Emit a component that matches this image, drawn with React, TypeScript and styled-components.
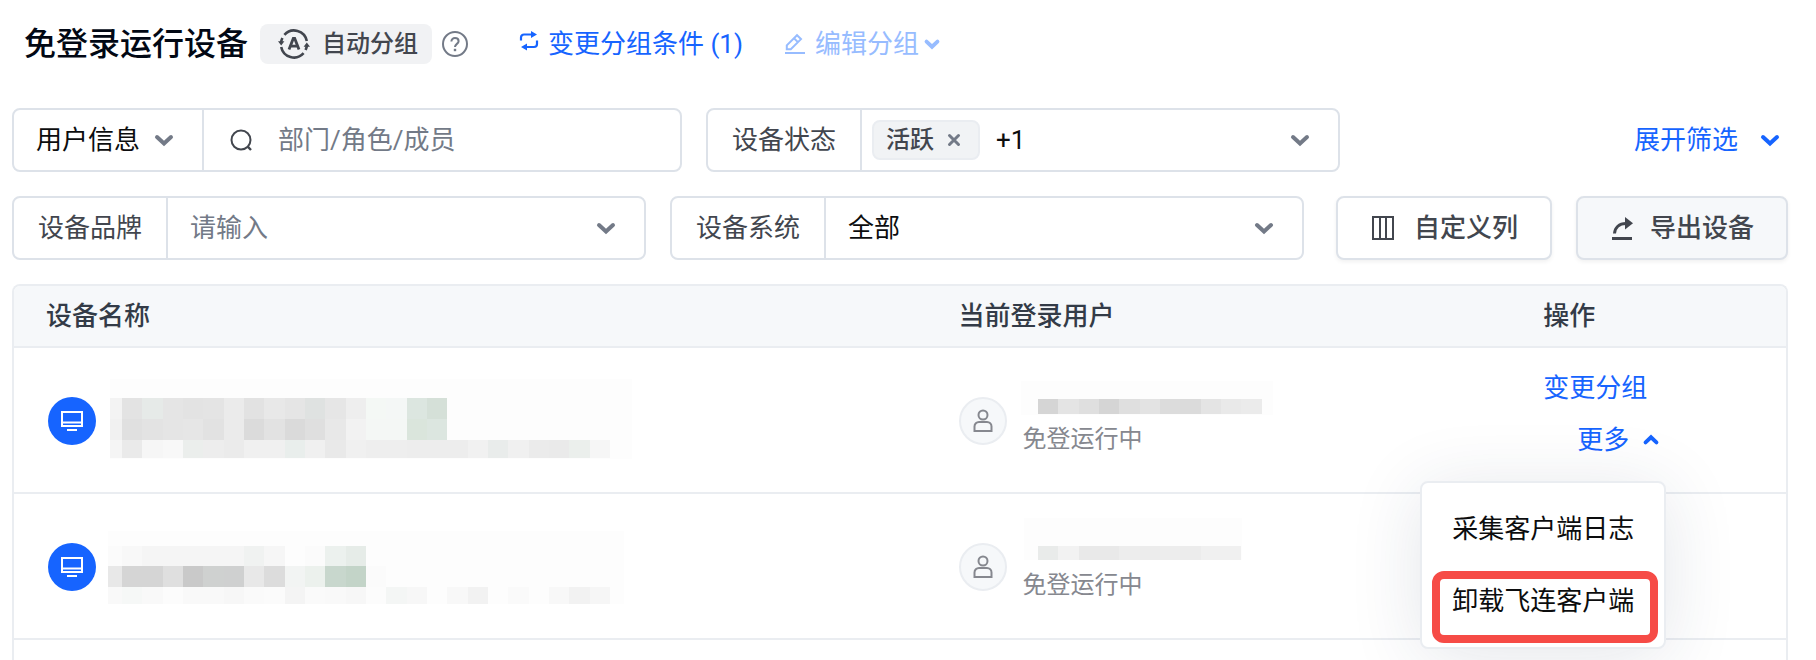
import React from "react";
import styled, { createGlobalStyle } from "styled-components";

const GlobalStyle = createGlobalStyle`
  *, *::before, *::after { box-sizing: border-box; }
  body {
    margin: 0;
    background: #fff;
    color: #0c0d0e;
    font-family: Roboto, "Noto Sans CJK SC", sans-serif;
    font-size: 26px;
    line-height: 40px;
  }
  button, input, select { font: inherit; color: inherit; }
  button { cursor: pointer; }
`;

const blue = "#1664ff";
const slate = "#737a87";
const ink = "#42464e";
const line = "#dde2e9";
const softLine = "#eaedf1";

const Page = styled.main`
  padding: 24px 28px 0 12px;
`;

const Header = styled.header`
  display: flex;
  align-items: center;
  height: 40px;
  padding-left: 12px;
`;

const Title = styled.h1`
  margin: 0 12px 0 0;
  font-size: 32px;
  font-weight: 500;
  line-height: 40px;
  color: #020814;
  white-space: nowrap;
`;

const Badge = styled.span`
  display: flex;
  align-items: center;
  gap: 12px;
  height: 40px;
  padding: 0 14px 0 18px;
  border-radius: 8px;
  background: #f1f2f4;
  color: ${ink};
  font-size: 24px;
  font-weight: 500;
  white-space: nowrap;
`;

const IconButton = styled.button`
  display: flex;
  padding: 0;
  border: 0;
  background: none;
  color: ${slate};
`;

const HelpButton = styled(IconButton)`
  margin: 0 52px 0 10px;
`;

const LinkButton = styled.button<{ $gap?: number }>`
  display: flex;
  align-items: center;
  gap: ${(p) => p.$gap ?? 8}px;
  padding: 0;
  border: 0;
  background: none;
  color: ${blue};
  white-space: nowrap;

  &:disabled {
    color: #97bcff;
    cursor: default;
  }
`;

const EditButton = styled(LinkButton)`
  margin-left: 42px;
`;

const WithChevron = styled.span`
  display: flex;
  align-items: center;
  gap: 6px;
`;

const Filters = styled.section`
  display: grid;
  gap: 24px;
  margin-top: 44px;
`;

const FilterRow = styled.div`
  display: flex;
  align-items: center;
  gap: 24px;
`;

const Field = styled.div<{ $basis: number }>`
  display: flex;
  flex: 0 1 ${(p) => p.$basis}px;
  min-width: 0;
  height: 64px;
  border: 2px solid ${line};
  border-radius: 8px;
  background: #fff;
`;

const FieldLabel = styled.label`
  display: flex;
  align-items: center;
  flex: none;
  padding: 0 24px;
  border-right: 2px solid ${line};
  color: ${ink};
  white-space: nowrap;
`;

const SelectBox = styled.span<{ $width?: number; $divided?: boolean }>`
  display: grid;
  flex: ${(p) => (p.$width ? `0 0 ${p.$width}px` : "1 1 0")};
  align-items: center;
  border-right: ${(p) => (p.$divided ? `2px solid ${line}` : "0")};

  > * { grid-area: 1 / 1; }
  > svg {
    justify-self: end;
    margin-right: 29px;
    color: ${slate};
    pointer-events: none;
  }
`;

const Select = styled.select`
  appearance: none;
  width: 100%;
  height: 60px;
  padding: 0 22px;
  border: 0;
  background: none;
  outline: none;
`;

const TextInput = styled.input`
  flex: 1;
  width: 100%;
  min-width: 0;
  height: 60px;
  padding: 0 22px;
  border: 0;
  background: none;
  outline: none;

  &::placeholder { color: ${slate}; opacity: 1; }
`;

const SearchBox = styled.label`
  display: flex;
  flex: 1;
  align-items: center;
  gap: 2px;
  padding-left: 26px;
  color: ${ink};
`;

const TagBox = styled.div`
  display: flex;
  flex: 1;
  align-items: center;
  gap: 16px;
  padding: 0 29px 0 10px;
`;

const Tag = styled.span`
  display: flex;
  align-items: center;
  gap: 14px;
  height: 40px;
  padding: 0 18px 0 12px;
  border: 2px solid ${softLine};
  border-radius: 8px;
  background: #f1f3f5;
  color: ${ink};
  font-size: 24px;
  font-weight: 500;
  line-height: 36px;
`;

const OpenButton = styled(IconButton)`
  margin-left: auto;
`;

const ExpandButton = styled(LinkButton)`
  margin: 0 9px 0 auto;
`;

const ActionButton = styled.button<{ $tinted?: boolean; $gap: number }>`
  display: flex;
  flex: none;
  align-items: center;
  justify-content: center;
  gap: ${(p) => p.$gap}px;
  height: 64px;
  padding: 0 32px 0 34px;
  border: 2px solid ${line};
  border-radius: 8px;
  background: ${(p) => (p.$tinted ? "#f6f8fa" : "#fff")};
  box-shadow: 0 2px 4px rgba(0, 0, 0, 0.06);
  color: ${ink};
  font-weight: 500;
  white-space: nowrap;
`;

const Actions = styled.div`
  display: flex;
  gap: 24px;
  margin-left: 8px;
`;

const DeviceTable = styled.table`
  width: 100%;
  margin-top: 24px;
  table-layout: fixed;
  border-collapse: separate;
  border-spacing: 0;
  border: 2px solid ${softLine};
  border-bottom: 0;
  border-radius: 8px 8px 0 0;
`;

const HeadCell = styled.th<{ $width?: string }>`
  width: ${(p) => p.$width ?? "auto"};
  height: 62px;
  padding: 0 32px;
  border-bottom: 2px solid ${softLine};
  background: #f6f8fa;
  color: #333b47;
  font-weight: 500;
  text-align: left;

  &:first-child { border-top-left-radius: 6px; }
  &:last-child { border-top-right-radius: 6px; }
`;

const Cell = styled.td`
  height: 146px;
  padding: 2px 32px 0;
  border-bottom: 2px solid ${softLine};
  vertical-align: middle;
`;

const NextCell = styled.td`
  height: 20px;
  padding: 0;
`;

const Identity = styled.div`
  display: flex;
  align-items: center;
  gap: 14px;
`;

const DeviceIdentity = styled(Identity)`
  padding-left: 2px;
`;

const DeviceIcon = styled.span`
  display: grid;
  flex: none;
  place-items: center;
  width: 48px;
  height: 48px;
  border-radius: 50%;
  background: ${blue};
  color: #fff;
`;

const UserIcon = styled(DeviceIcon)`
  border: 2px solid ${softLine};
  background: #f6f8fa;
  color: #86888f;
`;

const UserInfo = styled.div`
  display: grid;
  color: #86888f;
  font-size: 24px;
  line-height: 48px;
`;

const Status = styled.span`
  padding-left: 2px;
`;

const Operations = styled.div`
  display: flex;
  flex-direction: column;
  align-items: flex-start;
  height: 118px;
`;

const RowLink = styled(LinkButton)`
  height: 52px;
`;

const MoreWrap = styled.div`
  position: relative;
  margin-left: 34px;
`;

const Menu = styled.div`
  position: absolute;
  top: 67px;
  right: -8px;
  z-index: 1;
  width: 246px;
  padding: 10px 0;
  border: 2px solid ${softLine};
  border-radius: 8px;
  background: #fff;
  box-shadow: 0 8px 72px rgba(30, 50, 80, 0.12);
`;

const MenuItem = styled.button`
  display: block;
  width: 100%;
  height: 72px;
  padding: 0;
  border: 0;
  background: none;
  text-align: center;
  white-space: nowrap;
`;

const MarkedItem = styled.div`
  position: relative;

  &::after {
    content: "";
    position: absolute;
    inset: 6px 6px -6px 10px;
    border: 8px solid #f64b46;
    border-radius: 12px;
    pointer-events: none;
  }
`;

const Drawing = styled.svg`
  display: block;
  flex: none;
  overflow: visible;
`;

function Chevron({ size = 18, up = false }: { size?: number; up?: boolean }) {
  return (
    <Drawing width={size} height={size} viewBox="0 0 18 18" fill="none" stroke="currentColor" strokeWidth={size < 18 ? 5 : 4} strokeLinecap="round" aria-hidden>
      <path d={up ? "M2 12 9 5.5 16 12" : "M2 6 9 12.5 16 6"} />
    </Drawing>
  );
}

const AutoIcon = () => (
  <Drawing width="32" height="30" viewBox="0 0 32 30" fill="none" stroke="currentColor" strokeWidth="2.6" aria-hidden>
    <path d="M6.400 5.800A13 13 0 0 1 28.800 12M25.600 24.200A13 13 0 0 1 3.200 18" />
    <path d="M3.100 13.500A13 13 0 0 1 4.400 9M28.900 16.500A13 13 0 0 1 27.600 21" />
    <path d="M0 12.200h6.400l-3.200 4.200zM25.600 17.800H32l-3.200-4.200z" fill="currentColor" stroke="none" />
    <path d="m11 20.400 4.300-11h1.400l4.300 11M12.800 17.200h6.600" strokeWidth="2.800" />
  </Drawing>
);

const HelpIcon = () => (
  <Drawing width="26" height="26" viewBox="0 0 26 26" fill="none" stroke="currentColor" strokeWidth="2" aria-hidden>
    <circle cx="13" cy="13" r="12" />
    <path d="M9.400 10.400c0-2 1.600-3.400 3.600-3.400s3.600 1.300 3.600 3.200c0 2.600-3.600 2.800-3.600 5.800" />
    <path d="M13 17.800v2.400" strokeWidth="2.400" />
  </Drawing>
);

const SwapIcon = () => (
  <Drawing width="18" height="26" viewBox="0 0 18 26" fill="none" stroke="currentColor" strokeWidth="2.200" aria-hidden>
    <path d="M1 9.500V6.500a3 3 0 0 1 3-3h8M17 9.500v3.500a3 3 0 0 1-3 3H6" />
    <path d="M11 0v7l6-3.500zM7 12.500v7L1 16z" fill="currentColor" stroke="none" />
  </Drawing>
);

const EditIcon = () => (
  <Drawing width="20" height="20" viewBox="0 0 20 20" fill="none" stroke="currentColor" strokeWidth="2" aria-hidden>
    <path d="M1.800 15.200V11.300L12 1.200l4 3.900L5.800 15.200zM9 4.200l3.900 3.900M0 19h20" />
  </Drawing>
);

const SearchIcon = () => (
  <Drawing width="24" height="24" viewBox="0 0 24 24" fill="none" stroke="currentColor" strokeWidth="2" aria-hidden>
    <circle cx="11" cy="12" r="9.500" />
    <path d="m17.700 18.700 3.300 3.300" strokeWidth="2.400" />
  </Drawing>
);

const CloseIcon = () => (
  <Drawing width="12" height="12" viewBox="0 0 12 12" stroke="currentColor" strokeWidth="3" strokeLinecap="round" aria-hidden>
    <path d="m1.500 1.500 9 9M10.500 1.500l-9 9" />
  </Drawing>
);

const ColumnsIcon = () => (
  <Drawing width="22" height="26" viewBox="0 0 22 26" fill="none" stroke="currentColor" strokeWidth="2" aria-hidden>
    <path d="M1 2h20v22H1zM8 2v22M14 2v22" />
  </Drawing>
);

const ExportIcon = () => (
  <Drawing width="20" height="24" viewBox="0 0 20 24" fill="none" stroke="currentColor" strokeWidth="3" aria-hidden>
    <path d="M2.500 17.500C3 11.500 7 7.500 14 7.500M0 22.500h20" />
    <path d="M13 1v12.500l8-6.300z" fill="currentColor" stroke="none" />
  </Drawing>
);

const MonitorIcon = () => (
  <Drawing width="22" height="22" viewBox="0 0 22 22" fill="none" stroke="currentColor" strokeWidth="2" aria-hidden>
    <path d="M1 2h20v14H1zM1 12.500h20M6 20h10" />
  </Drawing>
);

const PersonIcon = () => (
  <Drawing width="20" height="24" viewBox="0 0 20 24" fill="none" stroke="currentColor" strokeWidth="2" aria-hidden>
    <circle cx="10" cy="6" r="4.500" />
    <path d="M1.500 22v-4.500a4.500 4.500 0 0 1 4.500-4.500h8a4.500 4.500 0 0 1 4.500 4.500V22z" />
  </Drawing>
);

/* One strip of a pixelated name; the first colour may fill a narrower block. */
type Strip = { x: number; y: number; height: number; lead?: number; colors: string };

const BLOCK = 61 / 3;

function Mosaic({ width, height, backdrop, strips }: { width: number; height: number; backdrop: number[]; strips: Strip[] }) {
  const [bx, by, bw, bh] = backdrop;
  return (
    <Drawing width={width} height={height} viewBox={`0 0 ${width} ${height}`} aria-hidden>
      <rect x={bx} y={by} width={bw} height={bh} fill="#fdfdfd" />
      {strips.map((s) =>
        s.colors.split(" ").map((c, i) => {
          const lead = s.lead ?? BLOCK;
          const x = i === 0 ? s.x : s.x + lead + (i - 1) * BLOCK;
          return (
            <rect
              key={`${s.y}-${i}`}
              x={x}
              y={s.y}
              width={i === 0 ? lead : BLOCK}
              height={s.height}
              fill={c.length === 2 ? `#${c}${c}${c}` : `#${c}`}
              shapeRendering="crispEdges"
            />
          );
        })
      )}
    </Drawing>
  );
}

const rows = [
  {
    device: {
      backdrop: [0, 0, 522, 80],
      strips: [
        { x: 0, y: 19, height: 21, lead: 12, colors: "f3 e3 e6eae8 e5 e3 e4 eb e2 e8 e5 dfe2e1 e6 ee f4f8f5 f4f7f6 dce6e0 d5e0d8" },
        { x: 0, y: 40, height: 21, lead: 12, colors: "f1 e0 e3 e5 e6 e2 eb db e2 da df e8 f2 f4f7f5 f4f7f5 dae5dc dce6e0" },
        { x: 0, y: 61, height: 18, lead: 12, colors: "f5 ea f6 f8 ebeeec ed eb f0 f0 e9eeec f0 e9 f0 ee ee ed ed ed f1 e9eceb f0 eb ea ebefec f6" },
      ],
    },
    user: {
      backdrop: [0, 2, 252, 34],
      strips: [{ x: 17, y: 20, height: 15, colors: "d5 e4 df d5 df e3 dc db e4 e9 eb" }],
    },
  },
  {
    device: {
      backdrop: [-2, 6, 516, 73],
      strips: [
        { x: -2, y: 21, height: 20, lead: 14, colors: "fb f8 f5 f5 f5 f5 f5 f0f2f1 f6 fd fb ecf1ee e6ece8" },
        { x: -2, y: 41, height: 21, lead: 14, colors: "e8 d5 d5 df c9 cfd1d0 cfd0d0 e8 dc f2f4f3 ecf1ed c8d7cd c3d4c8 fb" },
        { x: -2, y: 62, height: 17, lead: 14, colors: "f9 f6f8f7 f9 fc f9 f9 f7 fa fb f4 fa f9 f7 fc f4f6f5 f7 fd f8 f2 fd fa fd f8 f2 f6" },
      ],
    },
    user: {
      backdrop: [3, -7, 218, 42],
      strips: [{ x: 17, y: 21, height: 14, colors: "e9ebea f2 e9 e9 ed ec ed ec f0 f0" }],
    },
  },
];

export default function App() {
  return (
    <>
      <GlobalStyle />
      <Page>
        <Header>
          <Title>免登录运行设备</Title>
          <Badge>
            <AutoIcon />
            自动分组
          </Badge>
          <HelpButton type="button" aria-label="帮助">
            <HelpIcon />
          </HelpButton>
          <LinkButton type="button" $gap={10}>
            <SwapIcon />
            变更分组条件 (1)
          </LinkButton>
          <EditButton type="button" $gap={10} disabled>
            <EditIcon />
            <WithChevron>
              编辑分组
              <Chevron size={14} />
            </WithChevron>
          </EditButton>
        </Header>

        <Filters>
          <FilterRow>
            <Field $basis={670}>
              <SelectBox $width={190} $divided>
                <Select aria-label="筛选类型" defaultValue="user">
                  <option value="user">用户信息</option>
                </Select>
                <Chevron />
              </SelectBox>
              <SearchBox>
                <SearchIcon />
                <TextInput type="search" aria-label="搜索" placeholder="部门/角色/成员" />
              </SearchBox>
            </Field>
            <Field $basis={634}>
              <FieldLabel as="span">设备状态</FieldLabel>
              <TagBox role="group" aria-label="设备状态">
                <Tag>
                  活跃
                  <IconButton type="button" aria-label="移除活跃">
                    <CloseIcon />
                  </IconButton>
                </Tag>
                <span>+1</span>
                <OpenButton type="button" aria-label="展开选项">
                  <Chevron />
                </OpenButton>
              </TagBox>
            </Field>
            <ExpandButton type="button" $gap={23}>
              展开筛选
              <Chevron />
            </ExpandButton>
          </FilterRow>

          <FilterRow>
            <Field $basis={634}>
              <FieldLabel htmlFor="brand">设备品牌</FieldLabel>
              <SelectBox>
                <TextInput id="brand" placeholder="请输入" />
                <Chevron />
              </SelectBox>
            </Field>
            <Field $basis={634}>
              <FieldLabel htmlFor="system">设备系统</FieldLabel>
              <SelectBox>
                <Select id="system" defaultValue="all">
                  <option value="all">全部</option>
                </Select>
                <Chevron />
              </SelectBox>
            </Field>
            <Actions>
              <ActionButton type="button" $gap={20}>
                <ColumnsIcon />
                自定义列
              </ActionButton>
              <ActionButton type="button" $gap={18} $tinted>
                <ExportIcon />
                导出设备
              </ActionButton>
            </Actions>
          </FilterRow>
        </Filters>

        <DeviceTable>
          <thead>
            <tr>
              <HeadCell $width="51.5%">设备名称</HeadCell>
              <HeadCell>当前登录用户</HeadCell>
              <HeadCell $width="15.5%">操作</HeadCell>
            </tr>
          </thead>
          <tbody>
            {rows.map((row, i) => (
              <tr key={i}>
                <Cell>
                  <DeviceIdentity>
                    <DeviceIcon>
                      <MonitorIcon />
                    </DeviceIcon>
                    <Mosaic width={522} height={84} {...row.device} />
                  </DeviceIdentity>
                </Cell>
                <Cell>
                  <Identity>
                    <UserIcon>
                      <PersonIcon />
                    </UserIcon>
                    <UserInfo>
                      <Mosaic width={254} height={36} {...row.user} />
                      <Status>免登运行中</Status>
                    </UserInfo>
                  </Identity>
                </Cell>
                <Cell>
                  {i === 0 && (
                    <Operations>
                      <RowLink type="button">变更分组</RowLink>
                      <MoreWrap>
                        <RowLink type="button" $gap={15} aria-haspopup="menu" aria-expanded>
                          更多
                          <Chevron size={14} up />
                        </RowLink>
                        <Menu role="menu">
                          <MenuItem type="button" role="menuitem">采集客户端日志</MenuItem>
                          <MarkedItem>
                            <MenuItem type="button" role="menuitem">卸载飞连客户端</MenuItem>
                          </MarkedItem>
                        </Menu>
                      </MoreWrap>
                    </Operations>
                  )}
                </Cell>
              </tr>
            ))}
            <tr>
              <NextCell colSpan={3} />
            </tr>
          </tbody>
        </DeviceTable>
      </Page>
    </>
  );
}
